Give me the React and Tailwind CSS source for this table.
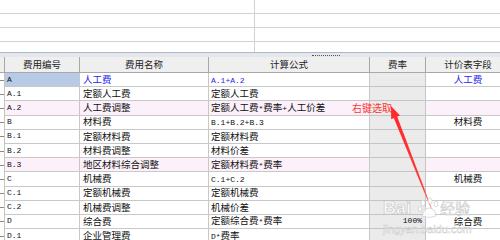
import React from "react";

const rows = [
  { code: "A", name: "人工费", formula: "A.1+A.2", field: "人工费", blue: true, sel: true },
  { code: "A.1", name: "定额人工费", formula: "定额人工费" },
  { code: "A.2", name: "人工费调整", formula: "定额人工费*费率+人工价差", pink: true },
  { code: "B", name: "材料费", formula: "B.1+B.2+B.3", field: "材料费" },
  { code: "B.1", name: "定额材料费", formula: "定额材料费" },
  { code: "B.2", name: "材料费调整", formula: "材料价差" },
  { code: "B.3", name: "地区材料综合调整", formula: "定额材料费*费率", pink: true },
  { code: "C", name: "机械费", formula: "C.1+C.2", field: "机械费" },
  { code: "C.1", name: "定额机械费", formula: "定额机械费" },
  { code: "C.2", name: "机械费调整", formula: "机械价差" },
  { code: "D", name: "综合费", formula: "定额综合费*费率", rate: "100%", field: "综合费" },
  { code: "D.1", name: "企业管理费", formula: "D*费率" },
];

function Mixed({ text }) {
  const parts = text.match(/[\x00-\x7F]+|[^\x00-\x7F]+/g) || [];
  return (
    <span className="whitespace-nowrap">
      {parts.map((p, i) =>
        /^[\x00-\x7F]+$/.test(p) ? (
          <span key={i} className="font-['Liberation_Mono',monospace] text-[8px]">
            {p}
          </span>
        ) : (
          <span key={i}>{p}</span>
        )
      )}
    </span>
  );
}

function TopRow({ last }) {
  return (
    <div className={last ? "flex h-[10px]" : "flex h-[14px] border-b border-[#d2d2d2]"}>
      <div className="w-[255px] shrink-0 border-r border-[#d2d2d2]" />
      <div className="flex-1" />
    </div>
  );
}

function Row({ r }) {
  const bg = r.pink ? "bg-[#fcf0fb]" : "bg-white";
  const txt = r.blue ? "text-[#2525f0]" : "text-[#111]";
  return (
    <div className={`flex h-[14.2px] ${bg}`}>
      <div className="w-[5px] shrink-0 bg-white border-r border-[#c4c4c4] flex items-center">
        <div className="h-px w-[4px] bg-[#8a8a8a]" />
      </div>
      <div
        className={
          r.sel
            ? "w-[75px] shrink-0 border-r border-b border-[#c8c8c8] bg-[#b7cbe6] flex items-center pl-[2px] font-['Liberation_Mono',monospace] text-[8px] text-[#111]"
            : "w-[75px] shrink-0 border-r border-b border-[#c8c8c8] flex items-center pl-[2px] font-['Liberation_Mono',monospace] text-[8px] text-[#111]"
        }
      >
        {r.code}
      </div>
      <div className={`w-[129px] shrink-0 border-r border-b border-[#c8c8c8] flex items-center pl-[3px] ${txt}`}>
        {r.name}
      </div>
      <div className={`w-[161px] shrink-0 border-r border-b border-[#c8c8c8] flex items-center pl-[2px] overflow-hidden ${txt}`}>
        <Mixed text={r.formula} />
      </div>
      <div className="w-[56px] shrink-0 border-r border-b border-[#c4c4c4] bg-[#ebebeb] flex items-center justify-end pr-[3px] font-['Liberation_Mono',monospace] text-[8px] text-[#111]">
        {r.rate || ""}
      </div>
      <div className={`w-[84px] shrink-0 border-b border-[#c8c8c8] flex items-center justify-center ${txt}`}>
        {r.field || ""}
      </div>
    </div>
  );
}

export default function App() {
  return (
    <div className="relative w-[500px] h-[240px] overflow-hidden bg-white font-['Noto_Sans_CJK_SC',sans-serif] text-[9.5px] leading-none">
      {/* top pane */}
      <div className="flex flex-col">
        <TopRow />
        <TopRow />
        <TopRow />
        <TopRow last />
      </div>
      {/* splitter */}
      <div className="h-px bg-[#a9b8ca]" />
      <div className="h-[4px] bg-[#e5e7ea] flex items-center justify-center pl-[152px]">
        <div className="w-[28px] h-px border-t border-dotted border-[#555]" />
      </div>
      {/* header */}
      <div className="flex h-[16px] bg-[#efefef] border-b border-[#a8a8a8] text-[#222]">
        <div className="w-[5px] shrink-0 border-r border-[#a8a8a8]" />
        <div className="w-[75px] shrink-0 border-r border-[#a8a8a8] flex items-center justify-center">费用编号</div>
        <div className="w-[129px] shrink-0 border-r border-[#a8a8a8] flex items-center justify-center">费用名称</div>
        <div className="w-[161px] shrink-0 border-r border-[#a8a8a8] flex items-center justify-center">计算公式</div>
        <div className="w-[56px] shrink-0 border-r border-[#a8a8a8] flex items-center justify-center">费率</div>
        <div className="w-[84px] shrink-0 flex items-center justify-center">计价表字段</div>
      </div>
      {/* body */}
      <div className="flex flex-col">
        {rows.map((r) => (
          <Row key={r.code} r={r} />
        ))}
      </div>

      {/* annotation */}
      <div className="absolute left-[352px] top-[103px] text-[10px] text-[#ff3535] whitespace-nowrap">右键选取</div>

      {/* arrow + watermark */}
      <svg className="absolute left-0 top-0 pointer-events-none" width="500" height="240" viewBox="0 0 500 240">
        <defs>
          <linearGradient id="fade" x1="395" y1="117" x2="432" y2="211" gradientUnits="userSpaceOnUse">
            <stop offset="0" stopColor="#ff2a2a" />
            <stop offset="0.75" stopColor="#ff3a3a" />
            <stop offset="1" stopColor="#ff9a9a" />
          </linearGradient>
        </defs>
        <polygon points="397.2,116.5 393.8,117.9 431.6,210.2 432.4,209.9" fill="url(#fade)" />
        <polygon points="391,106 400,115.4 391.2,119.2" fill="#ff2a2a" />
        <g opacity="0.85">
          <text x="383" y="214" fontSize="18" fontWeight="bold" fontFamily="Liberation Sans, sans-serif" fill="#ffffff" stroke="#c4c4c4" strokeWidth="0.7">Bai</text>
          <g fill="#ffffff" stroke="#c4c4c4" strokeWidth="0.7">
            <ellipse cx="423" cy="203" rx="2.2" ry="3" />
            <ellipse cx="430" cy="201" rx="2.2" ry="3" />
            <ellipse cx="436" cy="204" rx="2" ry="2.8" />
            <ellipse cx="420" cy="209" rx="1.8" ry="2.5" />
            <path d="M422 216 Q424 208 429 208 Q435 208 436 216 Q429 219 422 216 Z" />
          </g>
          <text x="440" y="214" fontSize="15" fontFamily="Noto Sans CJK SC, sans-serif" fill="#ffffff" stroke="#c4c4c4" strokeWidth="0.6">经验</text>
          <text x="383" y="233" fontSize="11" fontFamily="Liberation Sans, sans-serif" fill="#ffffff" stroke="#c8c8c8" strokeWidth="0.5">jingyan.baidu.com</text>
        </g>
      </svg>
    </div>
  );
}
